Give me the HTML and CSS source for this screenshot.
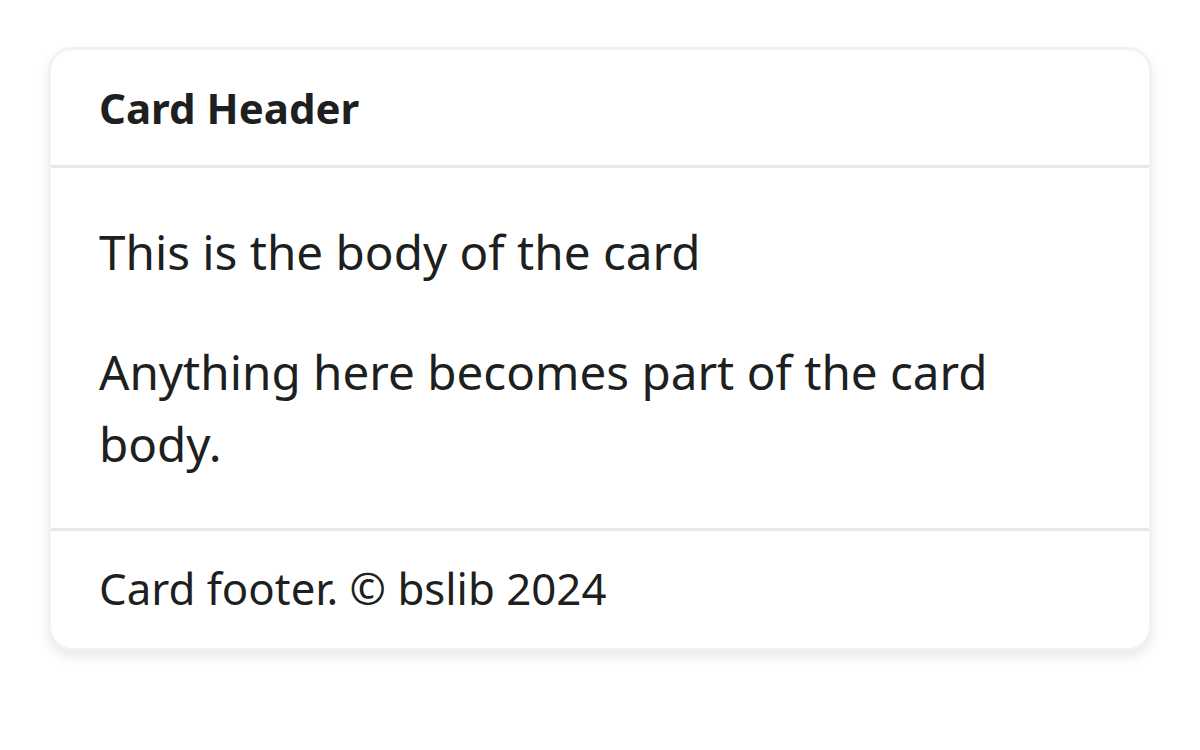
FILE: index.html
```html
<!DOCTYPE html>
<html>
<head>
<meta charset="utf-8">
<link rel="stylesheet" href="styles.css">
</head>
<body>
<main class="page">
  <section class="card">
    <header class="card-header">Card Header</header>
    <div class="card-body">
      <p>This is the body of the card</p>
      <p>Anything here becomes part of the card body.</p>
    </div>
    <footer class="card-footer">Card footer. © bslib 2024</footer>
  </section>
</main>
</body>
</html>
```

FILE: styles.css
```css
html, body {
  margin: 0;
  padding: 0;
  background: #ffffff;
}
body {
  font-family: "Noto Sans", "Open Sans", sans-serif;
  color: #1d1f21;
}
.page {
  padding: 47px 48px;
}
.card {
  display: flex;
  flex-direction: column;
  border: 3px solid rgba(0, 0, 0, 0.05);
  border-radius: 24px;
  background: #fff;
  box-shadow: 0 6px 12px rgba(0, 0, 0, 0.09);
  overflow: hidden;
}
.card-header {
  padding: 24px 48px;
  font-size: 42px;
  line-height: 67px;
  font-weight: 700;
  border-bottom: 3px solid #e6e9ec;
}
.card-body {
  padding: 48px 48px;
  font-size: 47.6px;
  line-height: 72px;
}
.card-body p {
  margin: 0 0 48px;
}
.card-body p:last-child {
  margin-bottom: 0;
}
.card-footer {
  padding: 24px 48px 27px;
  font-size: 43.8px;
  line-height: 66px;
  border-top: 3px solid #e6e9ec;
}
```
